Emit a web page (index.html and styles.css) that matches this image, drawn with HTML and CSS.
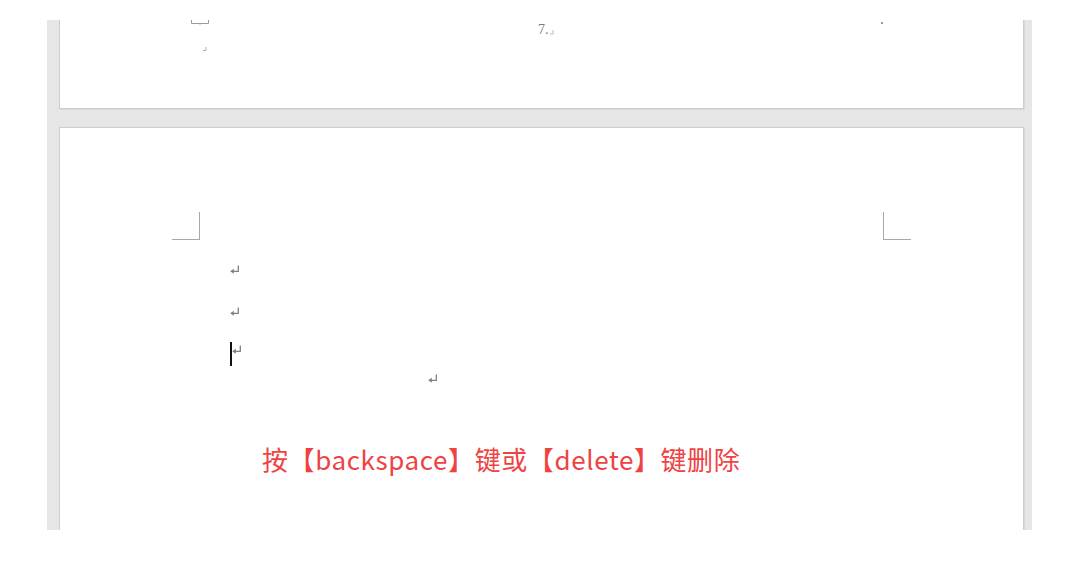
FILE: index.html
```html
<!DOCTYPE html>
<html lang="zh-CN">
<head>
<meta charset="utf-8">
<title>文档</title>
<link rel="stylesheet" href="styles.css">
</head>
<body>
<div class="viewport">
  <div class="page page-top">
    <div class="top-row">
      <div class="top-left">
        <svg class="bracket" width="18" height="5" viewBox="0 0 18 5"><path d="M0.5 0 V3.5 H17.5 V0" fill="none" stroke="#9a9a9a" stroke-width="1"/><path d="M9 3.5 V5" stroke="#bbb" stroke-width="1"/></svg>
        <svg class="tiny-mark" width="5" height="5" viewBox="0 0 5 5"><path d="M4 0 V3.5 H1" fill="none" stroke="#999" stroke-width="0.8"/></svg>
      </div>
      <div class="pagenum">7.<svg width="5" height="6" viewBox="0 0 5 6"><path d="M4 0 V4 H1" fill="none" stroke="#aaa" stroke-width="0.8"/></svg></div>
      <div class="dot"></div>
    </div>
  </div>
  <div class="page page-main">
    <div class="corners">
      <span class="corner corner-l"></span>
      <span class="corner corner-r"></span>
    </div>
    <div class="lines">
      <div class="line l1"><svg class="ret" width="11" height="10" viewBox="0 0 11 10"><path d="M9.3 0.5 V6.3 H2.5" fill="none" stroke="#808080" stroke-width="1.3"/><path d="M4.8 3.8 L1.2 6.3 L4.8 8.8 Z" fill="#808080"/></svg></div>
      <div class="line l2"><svg class="ret" width="11" height="10" viewBox="0 0 11 10"><path d="M9.3 0.5 V6.3 H2.5" fill="none" stroke="#808080" stroke-width="1.3"/><path d="M4.8 3.8 L1.2 6.3 L4.8 8.8 Z" fill="#808080"/></svg></div>
      <div class="line l3"><span class="cursor"></span><svg class="ret" width="11" height="10" viewBox="0 0 11 10"><path d="M9.3 0.5 V6.3 H2.5" fill="none" stroke="#808080" stroke-width="1.3"/><path d="M4.8 3.8 L1.2 6.3 L4.8 8.8 Z" fill="#808080"/></svg></div>
      <div class="line l4"><svg class="ret" width="11" height="10" viewBox="0 0 11 10"><path d="M9.3 0.5 V6.3 H2.5" fill="none" stroke="#808080" stroke-width="1.3"/><path d="M4.8 3.8 L1.2 6.3 L4.8 8.8 Z" fill="#808080"/></svg></div>
    </div>
    <p class="note">按【backspace】键或【delete】键删除</p>
  </div>
</div>
</body>
</html>
```

FILE: styles.css
```css
html, body {
  margin: 0;
  padding: 0;
  background: #ffffff;
}
body {
  font-family: "Noto Sans CJK SC", "Noto Sans", sans-serif;
}
.viewport {
  margin: 20px 0 0 47px;
  width: 985px;
  height: 510px;
  background: #e6e6e6;
  box-sizing: border-box;
  padding: 0 8px 0 12px;
  display: flex;
  flex-direction: column;
  gap: 18px;
  overflow: hidden;
}
.page {
  background: #ffffff;
  border: 1px solid #cdcdcd;
  box-shadow: 1px 1px 0 #d9d9d9;
  flex-shrink: 0;
}
.page-top {
  height: 88px;
  border-top: none;
}
.top-row {
  display: flex;
  align-items: flex-start;
}
.top-left {
  display: flex;
  flex-direction: column;
  margin-left: 131px;
  width: 18px;
}
.bracket { display: block; }
.tiny-mark {
  display: block;
  margin: 22px 0 0 11px;
}
.pagenum {
  margin-left: 329px;
  margin-top: 3px;
  font-family: "Liberation Serif", serif;
  font-size: 14px;
  line-height: 14px;
  color: #7a7a7a;
  display: flex;
  align-items: flex-end;
}
.pagenum svg { margin-bottom: 1px; }
.dot {
  width: 2px;
  height: 2px;
  background: #999;
  margin-left: 327px;
  margin-top: 2px;
}
.page-main {
  height: 420px;
}
.corners {
  display: flex;
  justify-content: space-between;
  padding: 84px 112px 0 112px;
}
.corner {
  width: 28px;
  height: 28px;
  box-sizing: border-box;
  border-bottom: 1.5px solid #a8a8a8;
}
.corner-l { border-right: 1.5px solid #a8a8a8; }
.corner-r { border-left: 1.5px solid #a8a8a8; }
.lines {
  display: flex;
  flex-direction: column;
  padding-left: 169px;
  margin-top: 25px;
}
.line {
  height: 10px;
  display: flex;
  align-items: center;
  position: relative;
}
.ret { display: block; }
.l2 { margin-top: 32px; }
.l3 { margin-top: 28px; }
.l4 { margin-top: 19px; padding-left: 198px; }
.cursor {
  position: absolute;
  left: 1px;
  top: -3px;
  width: 2px;
  height: 24px;
  background: #111;
}
.l3 .ret { margin-left: 2px; }
.note {
  margin: 59px 0 0 202px;
  color: #ef4242;
  font-size: 26px;
  line-height: 32px;
  letter-spacing: 0.6px;
}
```
